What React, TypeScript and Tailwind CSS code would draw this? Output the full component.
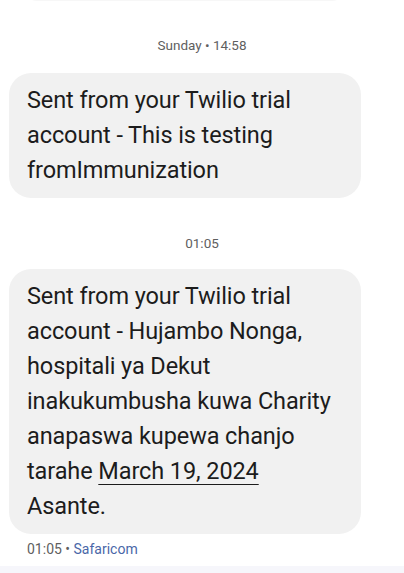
const Bubble = ({ children }: { children: React.ReactNode }) => (
  <div className="ml-[9px] w-[352px] rounded-[22px] bg-[#f1f1f1] pl-[18px] pr-3 py-[10px] text-[23.5px] leading-[35px] tracking-[-0.1px] text-[#1c1c1c]">
    {children}
  </div>
);

const Stamp = ({ children }: { children: React.ReactNode }) => (
  <div className="text-center text-[13.5px] leading-4 text-[#5f5f5f]">{children}</div>
);

export default function App() {
  return (
    <div className="relative h-[573px] w-[404px] overflow-hidden bg-white font-['Roboto',sans-serif]">
      {/* tail of the previous bubble */}
      <div className="absolute left-[22px] top-[-30px] h-[31px] w-[325px] rounded-[22px] bg-[#f7f7f7]" />

      <div className="flex flex-col pt-[37px]">
        <Stamp>Sunday • 14:58</Stamp>
        <div className="mt-[20px]">
          <Bubble>
            Sent from your Twilio trial
            <br />
            account - This is testing
            <br />
            fromImmunization
          </Bubble>
        </div>

        <div className="mt-[37px]">
          <Stamp>01:05</Stamp>
        </div>
        <div className="mt-[18px]">
          <Bubble>
            Sent from your Twilio trial
            <br />
            account - Hujambo Nonga,
            <br />
            hospitali ya Dekut
            <br />
            inakukumbusha kuwa Charity
            <br />
            anapaswa kupewa chanjo
            <br />
            tarahe <span className="underline decoration-1 underline-offset-[5px]">March 19, 2024</span>
            <br />
            Asante.
          </Bubble>
        </div>
        <div className="mt-[7px] pl-[27px] text-[14px] leading-4 text-[#5f5f5f]">
          01:05 • <span className="text-[#4a67a8]">Safaricom</span>
        </div>
      </div>

      <div className="absolute bottom-0 left-0 h-[7px] w-full bg-[#f6f6fb]" />
    </div>
  );
}
